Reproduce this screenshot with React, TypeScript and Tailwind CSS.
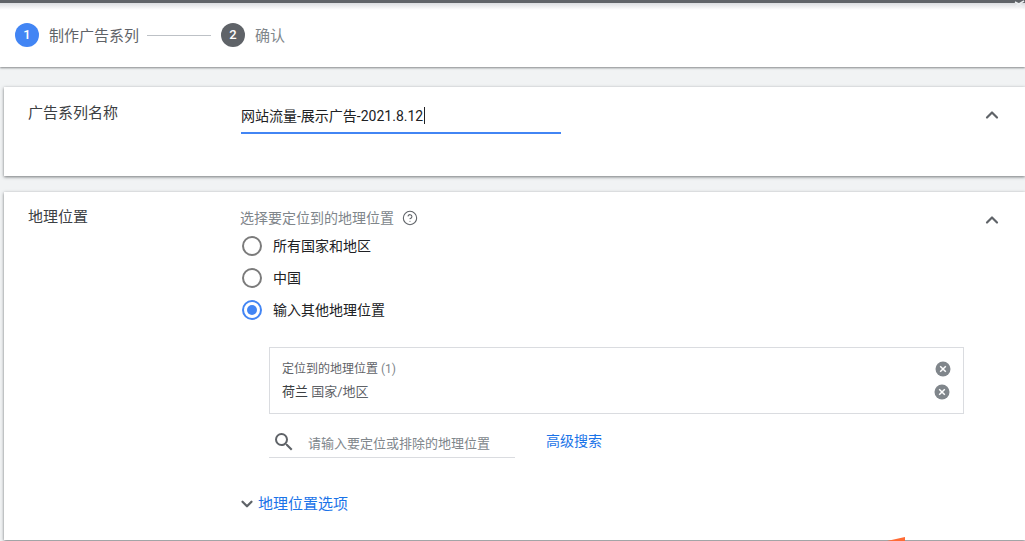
import { ChevronDown, ChevronUp, HelpCircle } from "lucide-react";

const font = "font-['Roboto','Noto_Sans_CJK_SC',sans-serif]";

function Radio({ label, checked }: { label: string; checked?: boolean }) {
  return (
    <div className="flex h-8 items-center">
      <div
        className={
          checked
            ? "ml-[2px] flex h-5 w-5 items-center justify-center rounded-full border-2 border-[#4285f4]"
            : "ml-[2px] flex h-5 w-5 items-center justify-center rounded-full border-2 border-[#7b7b7b]"
        }
      >
        {checked && <div className="h-[10px] w-[10px] rounded-full bg-[#4285f4]" />}
      </div>
      <span className="ml-[11px] text-sm text-[#202124]">{label}</span>
    </div>
  );
}

function ClearIcon() {
  return (
    <svg width="16" height="16" viewBox="0 0 16 16">
      <circle cx="8" cy="8" r="7.5" fill="#80868b" />
      <path d="M5.2 5.2l5.6 5.6M10.8 5.2l-5.6 5.6" stroke="#fff" strokeWidth="1.5" />
    </svg>
  );
}

function SearchIcon() {
  return (
    <svg className="mt-[4px]" width="24" height="24" viewBox="0 0 24 24" fill="#5f6368">
      <path d="M15.5 14h-.79l-.28-.27A6.47 6.47 0 0 0 16 9.5 6.5 6.5 0 1 0 9.5 16c1.61 0 3.09-.59 4.23-1.57l.27.28v.79l5 4.99L20.49 19l-4.99-5zm-6 0C7.01 14 5 11.99 5 9.5S7.01 5 9.5 5 14 7.01 14 9.5 11.99 14 9.5 14z" />
    </svg>
  );
}

export default function App() {
  return (
    <div className={`relative h-[541px] w-[1025px] overflow-hidden bg-[#f1f3f4] ${font}`}>
      {/* Stepper */}
      <header className="relative h-[67px] bg-white shadow-[0_1px_2px_rgba(60,64,67,0.6)]">
        <div className="h-[3px] bg-[#5f6368]" />
        <div className="h-[7px] bg-gradient-to-b from-[#dadce0] to-white" />
        <div className="flex h-[50px] items-center pl-[15px]">
          <div className="flex h-6 w-6 items-center justify-center rounded-full bg-[#4285f4] text-[13px] font-medium text-white">1</div>
          <span className="ml-[10px] mt-[2px] text-[15px] text-[#5f6368]">制作广告系列</span>
          <div className="ml-2 h-px w-16 bg-[#bdc1c6]" />
          <div className="ml-[10px] flex h-6 w-6 items-center justify-center rounded-full bg-[#5f6368] text-[13px] font-medium text-white">2</div>
          <span className="ml-[10px] mt-[2px] text-[15px] text-[#80868b]">确认</span>
        </div>
        <svg className="absolute right-0 top-0" width="11" height="9" viewBox="0 0 11 9">
          <path d="M1 2l4 2 5-3M1 7l4-3 5 4" stroke="#eceff1" strokeWidth="1.5" fill="none" />
        </svg>
      </header>

      {/* Campaign name */}
      <section className="ml-1 mt-5 flex h-[89px] bg-white shadow-[0_1px_3px_rgba(60,64,67,0.7)]">
        <div className="w-[236px] pl-6 pt-[15px] text-[15px] text-[#3c4043]">广告系列名称</div>
        <div className="ml-px w-[320px] pt-[17px]">
          <div className="h-[30px] border-b-2 border-[#4285f4] text-sm leading-[24px] text-[#202124]">
            网站流量-展示广告-2021.8.12<span className="ml-px inline-block h-[17px] w-px translate-y-[3px] bg-[#202124]" />
          </div>
        </div>
        <ChevronUp className="ml-[421px] mt-[18px] h-5 w-5 text-[#5f6368]" strokeWidth={2.6} />
      </section>

      {/* Location */}
      <section className="ml-1 mt-4 flex h-[348px] bg-white shadow-[0_1px_3px_rgba(60,64,67,0.7)]">
        <div className="w-[236px] pl-6 pt-[14px] text-[15px] text-[#3c4043]">地理位置</div>
        <div className="w-[724px] pt-[16px]">
          <div className="flex h-5 items-center text-sm text-[#80868b]">
            选择要定位到的地理位置
            <HelpCircle className="ml-[8px] h-4 w-4 text-[#5f6368]" strokeWidth={1.6} />
          </div>
          <div className="mt-[2px]">
            <Radio label="所有国家和地区" />
            <Radio label="中国" />
            <Radio label="输入其他地理位置" checked />
          </div>
          <div className="ml-[29px] mt-[21px] h-[67px] border border-[#dadce0] pl-3 pt-[13px]">
            <div className="flex h-4 items-center justify-between pr-[12px] text-xs text-[#5f6368]">
              <span>定位到的地理位置 <span className="text-[#80868b]">(1)</span></span>
              <ClearIcon />
            </div>
            <div className="mt-[7px] flex h-4 items-center justify-between pr-[13px] text-[13px] text-[#5f6368]">
              <span><span className="text-[#3c4043]">荷兰</span> 国家/地区</span>
              <ClearIcon />
            </div>
          </div>
          <div className="ml-[29px] mt-2 flex items-start">
            <div className="flex h-9 w-[246px] items-center border-b border-[#dadce0] pl-[3px]">
              <SearchIcon />
              <span className="ml-3 mt-[9px] text-[13px] text-[#80868b]">请输入要定位或排除的地理位置</span>
            </div>
            <span className="ml-[31px] mt-[9px] text-sm text-[#1a73e8]">高级搜索</span>
          </div>
          <div className="-ml-[2px] mt-[35px] flex items-center">
            <ChevronDown className="h-[18px] w-[18px] text-[#5f6368]" strokeWidth={3} />
            <span className="ml-[2px] text-[15px] text-[#1a73e8]">地理位置选项</span>
          </div>
        </div>
        <ChevronUp className="ml-[18px] mt-[18px] h-5 w-5 text-[#5f6368]" strokeWidth={2.6} />
      </section>

      {/* Stray annotation arrow tip at the bottom edge */}
      <svg className="absolute bottom-0 left-[886px]" width="20" height="5" viewBox="0 0 20 5">
        <path d="M1 5L19 1v4z" fill="#ff6b35" />
      </svg>
    </div>
  );
}
